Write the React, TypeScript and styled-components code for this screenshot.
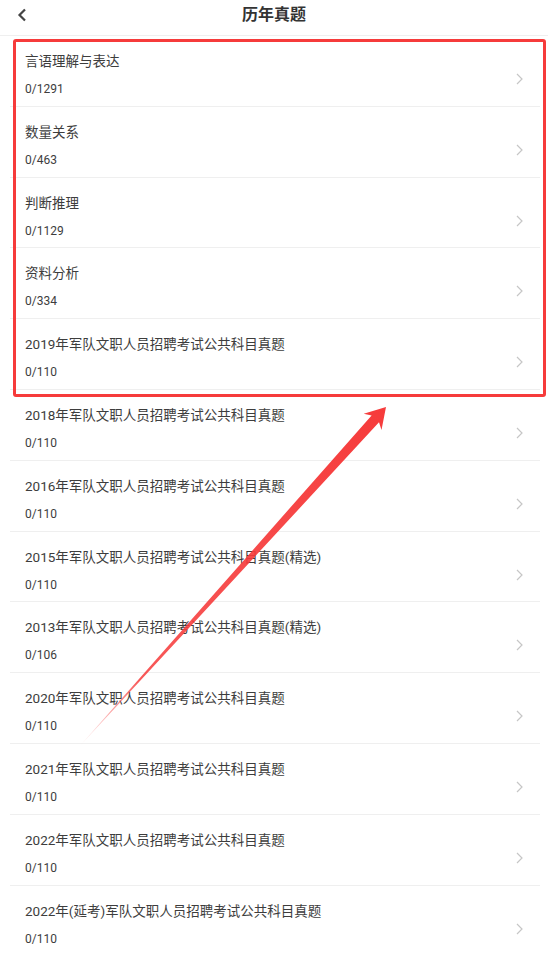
import styled, { createGlobalStyle } from 'styled-components'

interface Paper {
  title: string
  done: number
  total: number
}

const papers: Paper[] = [
  { title: '言语理解与表达', done: 0, total: 1291 },
  { title: '数量关系', done: 0, total: 463 },
  { title: '判断推理', done: 0, total: 1129 },
  { title: '资料分析', done: 0, total: 334 },
  { title: '2019年军队文职人员招聘考试公共科目真题', done: 0, total: 110 },
  { title: '2018年军队文职人员招聘考试公共科目真题', done: 0, total: 110 },
  { title: '2016年军队文职人员招聘考试公共科目真题', done: 0, total: 110 },
  { title: '2015年军队文职人员招聘考试公共科目真题(精选)', done: 0, total: 110 },
  { title: '2013年军队文职人员招聘考试公共科目真题(精选)', done: 0, total: 106 },
  { title: '2020年军队文职人员招聘考试公共科目真题', done: 0, total: 110 },
  { title: '2021年军队文职人员招聘考试公共科目真题', done: 0, total: 110 },
  { title: '2022年军队文职人员招聘考试公共科目真题', done: 0, total: 110 },
  { title: '2022年(延考)军队文职人员招聘考试公共科目真题', done: 0, total: 110 },
]

const GlobalStyle = createGlobalStyle`
  html, body {
    margin: 0;
    padding: 0;
    background: #fff;
  }
  body {
    font-family: Roboto, "Noto Sans CJK SC", sans-serif;
    color: #333;
  }
`

const Page = styled.div`
  position: relative;
  width: 548px;
  height: 954px;
  overflow: hidden;
  background: #fff;
`

const Header = styled.div`
  height: 36px;
  box-sizing: border-box;
  border-bottom: 1px solid #efefef;
  display: flex;
  align-items: center;
  justify-content: center;
  padding-bottom: 6px;
  position: relative;
`

const BackButton = styled.div`
  position: absolute;
  left: 15px;
  top: 7px;
  width: 14px;
  height: 16px;
  display: flex;
  align-items: center;
  justify-content: center;
`

const HeaderTitle = styled.h1`
  margin: 0;
  font-size: 16px;
  font-weight: bold;
  color: #333;
  line-height: 20px;
`

const List = styled.div`
  margin: 0 8px 0 10px;
`

const Row = styled.div`
  height: 70.8px;
  box-sizing: border-box;
  border-bottom: 1px solid #efefef;
  display: flex;
  align-items: flex-start;
  justify-content: space-between;
  padding: 0 17px 0 15px;
`

const RowText = styled.div`
  display: flex;
  flex-direction: column;
  padding-top: 16px;
`

const RowTitle = styled.div`
  font-size: 13.5px;
  line-height: 18px;
  color: #3d3d3d;
`

const RowCount = styled.div`
  margin-top: 11px;
  font-size: 12px;
  line-height: 16px;
  color: #3d3d3d;
`

const Chevron = styled.div`
  margin-top: 37px;
  width: 7px;
  height: 12px;
  display: flex;
`

const Highlight = styled.div`
  position: absolute;
  left: 13px;
  top: 39px;
  width: 533px;
  height: 358px;
  box-sizing: border-box;
  border: 3.5px solid #f63b3b;
  border-radius: 3px;
  pointer-events: none;
`

const ArrowLayer = styled.svg`
  position: absolute;
  left: 0;
  top: 0;
  pointer-events: none;
`

export default function App() {
  return (
    <>
      <GlobalStyle />
      <Page>
        <Header>
          <BackButton>
            <svg width="10" height="14" viewBox="0 0 10 14">
              <polyline
                points="8,1.5 2.5,7 8,12.5"
                fill="none"
                stroke="#444"
                strokeWidth="2.2"
              />
            </svg>
          </BackButton>
          <HeaderTitle>历年真题</HeaderTitle>
        </Header>
        <List>
          {papers.map((p) => (
            <Row key={p.title}>
              <RowText>
                <RowTitle>{p.title}</RowTitle>
                <RowCount>
                  {p.done}/{p.total}
                </RowCount>
              </RowText>
              <Chevron>
                <svg width="7" height="12" viewBox="0 0 7 12">
                  <polyline
                    points="1,1 6,6 1,11"
                    fill="none"
                    stroke="#c6c6c6"
                    strokeWidth="1.2"
                  />
                </svg>
              </Chevron>
            </Row>
          ))}
        </List>
        <Highlight />
        <ArrowLayer width="548" height="954" viewBox="0 0 548 954">
          <defs>
            <linearGradient id="arrowFade" x1="78" y1="748" x2="386" y2="407" gradientUnits="userSpaceOnUse">
              <stop offset="0" stopColor="#f63b3b" stopOpacity="0" />
              <stop offset="0.2" stopColor="#f63b3b" stopOpacity="0.85" />
              <stop offset="1" stopColor="#f63b3b" stopOpacity="1" />
            </linearGradient>
          </defs>
          <polygon
            points="386,407 381.5,430 379,422.3 78,748 371.6,415.5 363.7,413.8"
            fill="url(#arrowFade)"
          />
        </ArrowLayer>
      </Page>
    </>
  )
}
